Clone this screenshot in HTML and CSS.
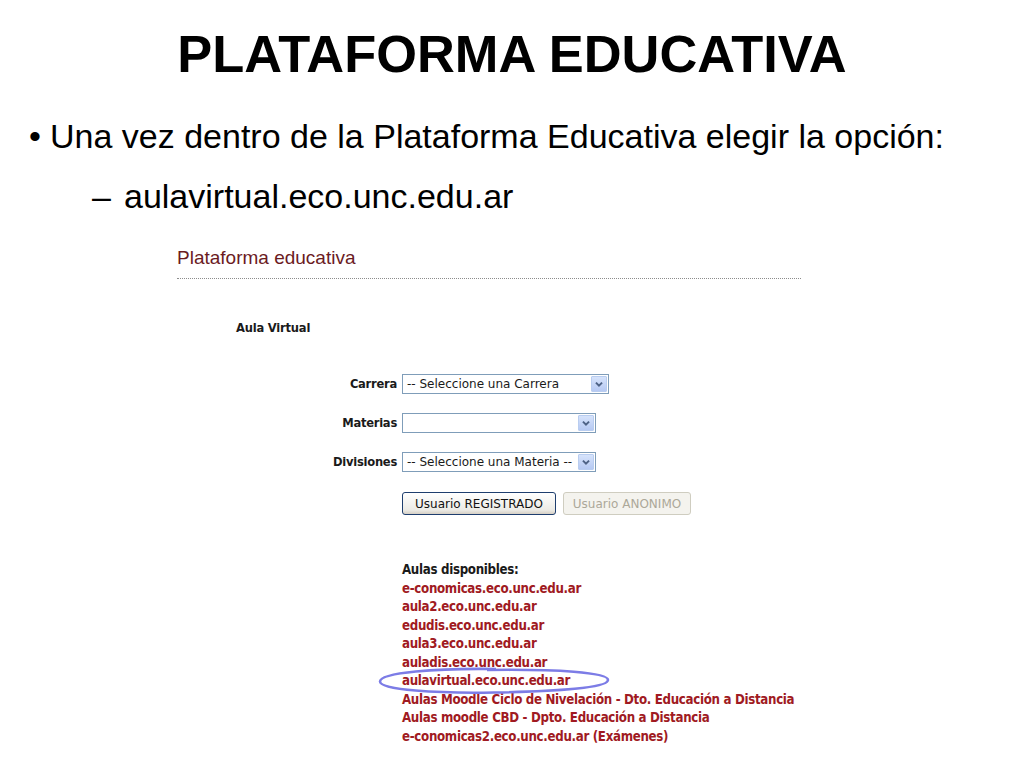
FILE: index.html
```html
<!DOCTYPE html>
<html lang="es">
<head>
<meta charset="utf-8">
<title>Plataforma Educativa</title>
<link rel="stylesheet" href="styles.css">
</head>
<body>
<div class="slide">
  <h1 class="title">PLATAFORMA EDUCATIVA</h1>
  <ul class="bullets">
    <li class="lvl1"><span class="mark">•</span><span>Una vez dentro de la Plataforma Educativa elegir la opción:</span></li>
    <li class="lvl2"><span class="mark">–</span><span>aulavirtual.eco.unc.edu.ar</span></li>
  </ul>

  <div class="shot">
    <div class="shot-head">Plataforma educativa</div>
    <div class="shot-rule"></div>
    <div class="aula-title">Aula Virtual</div>

    <div class="form">
      <span class="label">Carrera</span>
      <div class="select select-wide"><span class="select-text">-- Seleccione una Carrera</span><span class="arrow"><svg viewBox="0 0 16 16" width="16" height="16"><path d="M4.5 6.5 L8 10 L11.5 6.5" fill="none" stroke="#4d6185" stroke-width="2.2"/></svg></span></div>

      <span class="label">Materias</span>
      <div class="select select-narrow"><span class="select-text"></span><span class="arrow"><svg viewBox="0 0 16 16" width="16" height="16"><path d="M4.5 6.5 L8 10 L11.5 6.5" fill="none" stroke="#4d6185" stroke-width="2.2"/></svg></span></div>

      <span class="label">Divisiones</span>
      <div class="select select-narrow"><span class="select-text">-- Seleccione una Materia --</span><span class="arrow"><svg viewBox="0 0 16 16" width="16" height="16"><path d="M4.5 6.5 L8 10 L11.5 6.5" fill="none" stroke="#4d6185" stroke-width="2.2"/></svg></span></div>

      <span class="label"></span>
      <div class="buttons">
        <span class="btn btn-main">Usuario REGISTRADO</span>
        <span class="btn btn-disabled">Usuario ANONIMO</span>
      </div>
    </div>

    <div class="aulas">
      <div class="aulas-head">Aulas disponibles:</div>
      <a class="aula">e-conomicas.eco.unc.edu.ar</a>
      <a class="aula">aula2.eco.unc.edu.ar</a>
      <a class="aula">edudis.eco.unc.edu.ar</a>
      <a class="aula">aula3.eco.unc.edu.ar</a>
      <a class="aula">auladis.eco.unc.edu.ar</a>
      <a class="aula aula-marked">aulavirtual.eco.unc.edu.ar<svg class="ring" viewBox="0 0 234 30" width="234" height="30"><path d="M119 3 C 60 2, 3 6.5, 3 15.5 C 3 24, 60 27.5, 117 26.5 C 180 25.5, 231 22, 231 14 C 231 6.5, 180 3, 110 4" fill="none" stroke="#7c7ce6" stroke-width="2.6"/></svg></a>
      <a class="aula">Aulas Moodle Ciclo de Nivelación - Dto. Educación a Distancia</a>
      <a class="aula">Aulas moodle CBD - Dpto. Educación a Distancia</a>
      <a class="aula">e-conomicas2.eco.unc.edu.ar (Exámenes)</a>
    </div>
  </div>
</div>
</body>
</html>
```

FILE: styles.css
```css
html, body {
  margin: 0;
  padding: 0;
  background: #ffffff;
}

.slide {
  width: 1024px;
  height: 768px;
  overflow: hidden;
  font-family: "Liberation Sans", Arial, sans-serif;
  color: #000000;
}

.title {
  margin: 0;
  padding-top: 24px;
  font-size: 52.4px;
  line-height: 60px;
  font-weight: bold;
  text-align: center;
}

.bullets {
  list-style: none;
  margin: 22px 0 0 0;
  padding: 0;
  font-size: 34px;
  line-height: 60px;
}

.bullets li {
  display: flex;
}

.lvl1 {
  padding-left: 29px;
}

.lvl1 .mark {
  width: 21px;
}

.lvl2 {
  padding-left: 92px;
}

.lvl2 .mark {
  width: 32px;
}

.shot {
  position: relative;
  margin-left: 177px;
  width: 624px;
  padding-top: 21px;
}

.shot-head {
  font-family: "Liberation Sans", Arial, sans-serif;
  font-size: 19px;
  line-height: 22px;
  color: #6b1b1f;
  margin-bottom: 9px;
}

.shot-rule {
  border-top: 1px dotted #8c8c8c;
  width: 624px;
}

.aula-title {
  margin-top: 41px;
  margin-left: 59px;
  font-family: "DejaVu Sans Condensed", "DejaVu Sans", sans-serif;
  font-stretch: condensed;
  font-weight: bold;
  font-size: 12.8px;
  letter-spacing: -0.2px;
  line-height: 16px;
  color: #1a1a1a;
}

.form {
  margin-top: 38px;
  display: grid;
  grid-template-columns: 220px auto;
  column-gap: 5px;
  row-gap: 19px;
  align-items: center;
  justify-items: start;
}

.label {
  justify-self: end;
  font-family: "DejaVu Sans Condensed", "DejaVu Sans", sans-serif;
  font-stretch: condensed;
  font-weight: bold;
  font-size: 12.8px;
  letter-spacing: -0.25px;
  line-height: 16px;
  color: #1a1a1a;
}

.select {
  box-sizing: border-box;
  height: 20px;
  border: 1px solid #7f9db9;
  background: #ffffff;
  display: flex;
  align-items: center;
  justify-content: space-between;
  padding: 0 1px 0 4px;
}

.select-wide {
  width: 207px;
}

.select-narrow {
  width: 194px;
}

.select-text {
  font-family: "DejaVu Sans", sans-serif;
  font-size: 12px;
  line-height: 16px;
  color: #1a1a1a;
  white-space: nowrap;
}

.arrow {
  box-sizing: border-box;
  width: 16px;
  height: 16px;
  border: 1px solid #b9cdf0;
  border-radius: 1px;
  background: linear-gradient(#d6e3fb, #b6c9f3);
  display: flex;
  align-items: center;
  justify-content: center;
}

.arrow svg {
  width: 14px;
  height: 14px;
}

.buttons {
  display: flex;
  gap: 7px;
  margin-top: 1px;
}

.btn {
  box-sizing: border-box;
  height: 23px;
  display: flex;
  align-items: center;
  justify-content: center;
  border-radius: 3px;
  font-family: "DejaVu Sans", sans-serif;
  font-size: 12px;
}

.btn-main {
  width: 154px;
  border: 1px solid #1e3e6e;
  background: linear-gradient(#ffffff, #ecebe6 80%, #d6d0c5);
  color: #111111;
}

.btn-disabled {
  width: 128px;
  border: 1px solid #cfcdc0;
  background: #f4f3ee;
  color: #aca899;
}

.aulas {
  margin-top: 46px;
  margin-left: 225px;
  display: flex;
  flex-direction: column;
  align-items: flex-start;
  font-family: "DejaVu Sans Condensed", "DejaVu Sans", sans-serif;
  font-stretch: condensed;
  font-weight: bold;
  font-size: 13.2px;
  letter-spacing: -0.32px;
  line-height: 18.5px;
}

.aulas-head {
  color: #1a1a1a;
}

.aula {
  color: #a01a22;
  text-decoration: none;
  white-space: nowrap;
}

.aula-marked {
  position: relative;
}

.ring {
  position: absolute;
  left: -25px;
  top: -6px;
}
```
